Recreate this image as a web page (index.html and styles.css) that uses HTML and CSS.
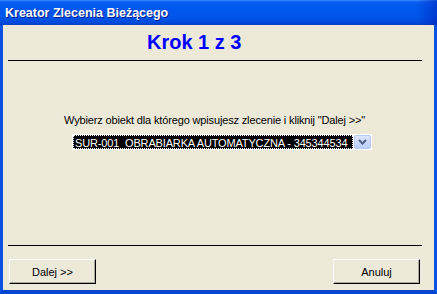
FILE: index.html
```html
<!DOCTYPE html>
<html lang="pl">
<head>
    <meta charset="UTF-8">
    <title>Kreator Zlecenia Bieżącego</title>
    <link rel="stylesheet" href="styles.css">
</head>
<body>
    <div class="window">
        <!-- Title bar -->
        <div class="titlebar">Kreator Zlecenia Bieżącego</div>

        <!-- Client area -->
        <div class="client">
            <div class="step">Krok 1 z 3</div>
            <div class="rule"></div>

            <div class="content">
                <div class="hint">Wybierz obiekt dla którego wpisujesz zlecenie i kliknij "Dalej &gt;&gt;"</div>
                <div class="combo">
                    <div class="combo-value"><span>SUR-001&nbsp; OBRABIARKA AUTOMATYCZNA - 345344534</span></div>
                    <div class="combo-button">
                        <svg width="9" height="6" viewBox="0 0 9 6">
                            <path d="M1 1 L4.5 4.5 L8 1" fill="none" stroke="#4d6185" stroke-width="2"/>
                        </svg>
                    </div>
                </div>
            </div>

            <div class="rule"></div>
            <div class="footer">
                <button class="btn">Dalej &gt;&gt;</button>
                <button class="btn">Anuluj</button>
            </div>
        </div>
    </div>
</body>
</html>
```

FILE: styles.css
```css
body {
    margin: 0;
    font-family: "Liberation Sans", Arial, sans-serif;
    background-color: #0054e3;
}
.window {
    width: 437px;
    height: 294px;
    display: flex;
    flex-direction: column;
    box-sizing: border-box;
}
.titlebar {
    height: 25px;
    box-sizing: border-box;
    padding: 1px 0 0 5px;
    line-height: 24px;
    font-size: 12.5px;
    font-weight: bold;
    color: #ffffff;
    text-shadow: 1px 1px 0 #0a1e8c;
    background: linear-gradient(to bottom, #3a8cff 0px, #0a5ef0 2px, #0058ee 8px, #0054e8 18px, #0048d8 23px, #003cc4 25px);
    position: relative;
}
.titlebar::after {
    content: "";
    position: absolute;
    top: 0;
    right: 0;
    width: 20px;
    height: 25px;
    background: linear-gradient(to right, rgba(0, 40, 190, 0), rgba(0, 40, 190, 0.6));
}
.client {
    flex: 1;
    display: flex;
    flex-direction: column;
    background-color: #ece9d8;
    border-left: 3px solid #0553e0;
    border-right: 3px solid #0553e0;
    border-bottom: 4px solid #0546d0;
}
.step {
    margin-top: 5px;
    padding-left: 144px;
    line-height: 24px;
    font-size: 20px;
    font-weight: bold;
    color: #0000ff;
}
.rule {
    height: 1px;
    margin: 6px 12px 0 5px;
    background-color: #000000;
}
.content {
    flex: 1;
    display: flex;
    flex-direction: column;
    font-size: 11px;
}
.hint {
    margin-top: 53px;
    padding-left: 61px;
    line-height: 13px;
    letter-spacing: -0.15px;
    color: #000000;
}
.combo {
    margin: 7px 0 0 69px;
    width: 300px;
    height: 16px;
    box-sizing: border-box;
    border: 1px solid #ffffff;
    background-color: #ffffff;
    display: flex;
}
.combo-value {
    flex: 1;
    background-color: #000000;
    color: #ffffff;
    line-height: 14px;
    letter-spacing: -0.15px;
    overflow: hidden;
    white-space: nowrap;
    border: 1px dotted #ffffff;
    box-sizing: border-box;
}
.combo-value span {
    padding-left: 1px;
}
.combo-button {
    width: 17px;
    margin-left: 1px;
    background: linear-gradient(to bottom, #dbe6fd, #b9cdf9);
    border: 1px solid #b6c9f2;
    border-radius: 2px;
    box-sizing: border-box;
    display: flex;
    align-items: center;
    justify-content: center;
}
.footer {
    display: flex;
    justify-content: space-between;
    padding: 13px 14px 6px 6px;
}
.btn {
    width: 87px;
    height: 25px;
    font-family: "Liberation Sans", Arial, sans-serif;
    font-size: 11px;
    color: #000000;
    background-color: #ece9d8;
    border: 1px solid;
    border-color: #ffffff #000000 #000000 #ffffff;
    box-shadow: inset -1px -1px 0 #aca899;
    padding: 0;
}
```
